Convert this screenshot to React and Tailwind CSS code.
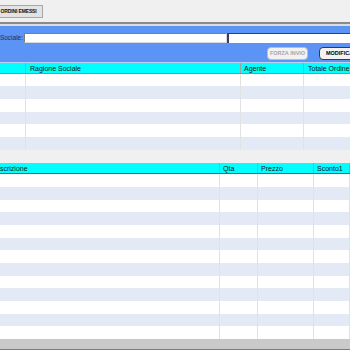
import React from "react";

const font = { fontFamily: '"Liberation Sans", Arial, sans-serif' };

function Rows1() {
  const rows = [12, 13, 13, 12, 13, 13];
  return (
    <div className="flex flex-col">
      {rows.map((h, i) => (
        <div
          key={i}
          className={`flex ${i % 2 === 1 ? "bg-[#e4eaf5]" : "bg-white"}`}
          style={{ height: h }}
        >
          <div className="w-[26px] border-r border-[#e2e2e2]" />
          <div className="w-[215px] border-r border-[#e2e2e2]" />
          <div className="w-[63px] border-r border-[#e2e2e2]" />
          <div className="flex-1" />
        </div>
      ))}
    </div>
  );
}

function Rows2() {
  const rows = [13, 13, 12, 13, 13, 12, 13, 13, 12, 13, 13, 12, 13];
  return (
    <div className="flex flex-col">
      {rows.map((h, i) => (
        <div
          key={i}
          className={`flex ${i % 2 === 1 ? "bg-[#e4eaf5]" : "bg-white"}`}
          style={{ height: h }}
        >
          <div className="w-[220px] border-r border-[#e2e2e2]" />
          <div className="w-[38px] border-r border-[#e2e2e2]" />
          <div className="w-[56px] border-r border-[#e2e2e2]" />
          <div className="w-[36px] border-r border-[#e2e2e2]" />
        </div>
      ))}
    </div>
  );
}

export default function App() {
  return (
    <div
      className="w-[350px] h-[350px] overflow-hidden bg-[#f0f0f0] flex flex-col text-[#111]"
      style={font}
    >
      {/* top tab strip */}
      <div className="h-[22px] flex items-start pt-[5px]">
        <div className="-ml-[6px] h-[13px] w-[49px] border border-[#a8a8a8] bg-[#e3e3e3] flex items-center justify-center text-[5px] font-bold tracking-tight leading-none">
          ORDINI EMESSI
        </div>
      </div>
      <div className="h-[2px] bg-[#8a8a8a]" />
      <div className="h-[2px] bg-[#dcdcdc]" />

      {/* blue filter panel */}
      <div className="h-[36px] bg-[#5c94f6] flex flex-col">
        <div className="flex items-center mt-[7px] h-[10px]">
          <div className="w-[24px] flex justify-end pr-[1px] overflow-hidden">
            <span className="text-[6.5px] leading-none text-[#1c2a55] whitespace-nowrap">
              Sociale:
            </span>
          </div>
          <div className="w-[203px] h-[10px] bg-white border border-[#7d7d7d] border-b-[#d8d8d8] border-r-[#d8d8d8]" />
          <div className="flex-1 h-[10px] bg-white border-l-2 border-t border-[#3b3b6b]" />
        </div>
        <div className="flex justify-end mt-[4px] gap-[11px] -mr-[10px]">
          <div className="w-[41px] h-[13px] rounded-[4px] border border-[#bdbdbd] bg-[#f2f2f2] flex items-center justify-center text-[5.5px] font-bold text-[#a6a6a6] leading-none whitespace-nowrap">
            FORZA INVIO
          </div>
          <div className="w-[41px] h-[13px] rounded-[4px] border border-[#3a3a3a] bg-[#f2f2f2] flex items-center justify-start pl-[6px] text-[5.5px] font-bold text-black leading-none whitespace-nowrap">
            MODIFICA
          </div>
        </div>
      </div>
      <div className="h-[1px] bg-[#bcd0f0]" />

      {/* table 1 */}
      <div className="h-[11px] bg-[#00ffff] flex text-[7px] leading-none border-b border-[#8c8c8c]">
        <div className="w-[26px] border-r border-[#a0a0a0]" />
        <div className="w-[215px] border-r border-[#a0a0a0] flex items-center pl-[4px]">
          Ragione Sociale
        </div>
        <div className="w-[63px] border-r border-[#a0a0a0] flex items-center pl-[3px]">
          Agente
        </div>
        <div className="flex-1 flex items-center pl-[4px] whitespace-nowrap">
          Totale Ordine
        </div>
      </div>
      <Rows1 />

      <div className="h-[13px]" />

      {/* table 2 */}
      <div className="h-[11px] bg-[#00ffff] flex text-[7px] leading-none border-b border-[#2f6f6f]">
        <div className="w-[220px] border-r border-[#a0a0a0] flex items-center overflow-hidden">
          <span className="-ml-[9px]">Descrizione</span>
        </div>
        <div className="w-[38px] border-r border-[#a0a0a0] flex items-center pl-[3px]">
          Qta
        </div>
        <div className="w-[56px] border-r border-[#a0a0a0] flex items-center pl-[3px]">
          Prezzo
        </div>
        <div className="w-[36px] border-r border-[#a0a0a0] flex items-center pl-[3px]">
          Sconto1
        </div>
      </div>
      <Rows2 />

      {/* bottom bar */}
      <div className="h-[10px] bg-[#cacaca]" />
      <div className="h-[1px] bg-[#7a7a7a]" />
      <div className="flex-1 bg-[#e6e6e6]" />
    </div>
  );
}
